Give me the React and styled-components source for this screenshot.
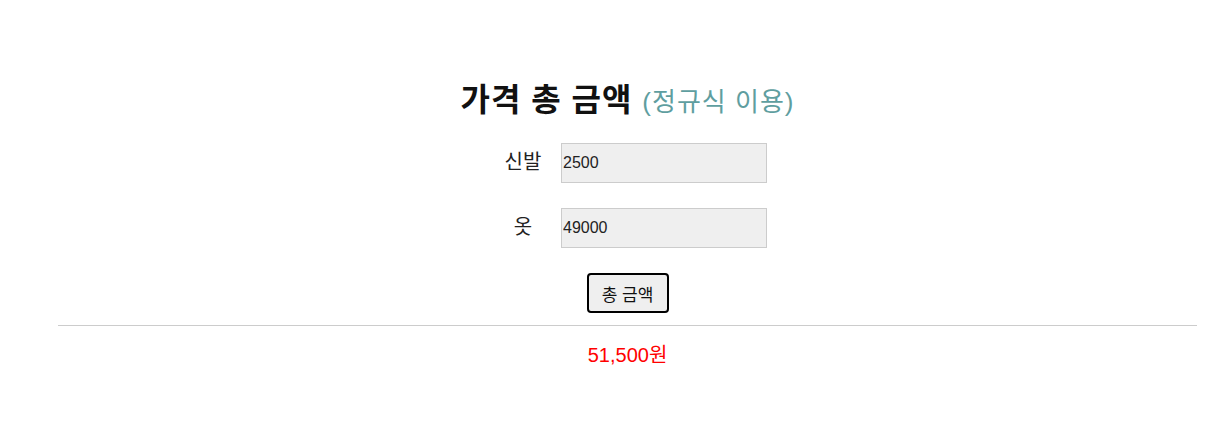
import React, { useState } from 'react';
import styled, { createGlobalStyle } from 'styled-components';

const GlobalStyle = createGlobalStyle`
  body {
    margin: 0;
    background: #fff;
    font-family: "Liberation Sans", "Noto Sans CJK KR", sans-serif;
    color: #222;
  }
`;

const Page = styled.div`
  margin: 0 31px 0 58px;
  padding-top: 78px;
  text-align: center;
`;

const Title = styled.h1`
  margin: 0 0 19px;
  font-size: 32px;
  font-weight: bold;
  letter-spacing: 1px;
  color: #111;
  line-height: 44px;
`;

const Sub = styled.span`
  font-size: 26px;
  font-weight: normal;
  letter-spacing: 1px;
  color: #5f9ea0;
`;

const Form = styled.div`
  display: flex;
  flex-direction: column;
  align-items: center;
  gap: 25px;
`;

const Row = styled.div`
  display: flex;
  align-items: center;
  gap: 3px;
`;

const Label = styled.label`
  width: 70px;
  margin-bottom: 5px;
  font-size: 20px;
  color: #222;
  text-align: center;
`;

const Input = styled.input`
  box-sizing: border-box;
  width: 206px;
  height: 40px;
  padding: 0 1px;
  border: 1px solid #ccc;
  background: #efefef;
  font-family: "Liberation Sans", sans-serif;
  font-size: 16px;
  color: #222;
  outline: none;
`;

const Button = styled.button`
  box-sizing: border-box;
  width: 82px;
  height: 40px;
  padding: 0;
  border: 2px solid #000;
  border-radius: 4px;
  background: #efefef;
  font-family: "Liberation Sans", "Noto Sans CJK KR", sans-serif;
  font-size: 17px;
  color: #111;
`;

const Divider = styled.hr`
  margin: 12px 0 0;
  border: none;
  border-top: 1px solid #ccc;
`;

const Result = styled.p`
  margin: 13px 0 0;
  font-size: 20px;
  color: #f00;
`;

const App = () => {
  const [shoes, setShoes] = useState('2500');
  const [clothes, setClothes] = useState('49000');
  const [total, setTotal] = useState(51500);

  const calc = () => setTotal((Number(shoes) || 0) + (Number(clothes) || 0));

  return (
    <>
      <GlobalStyle />
      <Page>
        <Title>
          가격 총 금액 <Sub>(정규식 이용)</Sub>
        </Title>
        <Form>
          <Row>
            <Label>신발</Label>
            <Input value={shoes} onChange={e => setShoes(e.target.value)} />
          </Row>
          <Row>
            <Label>옷</Label>
            <Input value={clothes} onChange={e => setClothes(e.target.value)} />
          </Row>
          <Button onClick={calc}>총 금액</Button>
        </Form>
        <Divider />
        <Result>{total.toLocaleString('en-US')}원</Result>
      </Page>
    </>
  );
};

export default App;
